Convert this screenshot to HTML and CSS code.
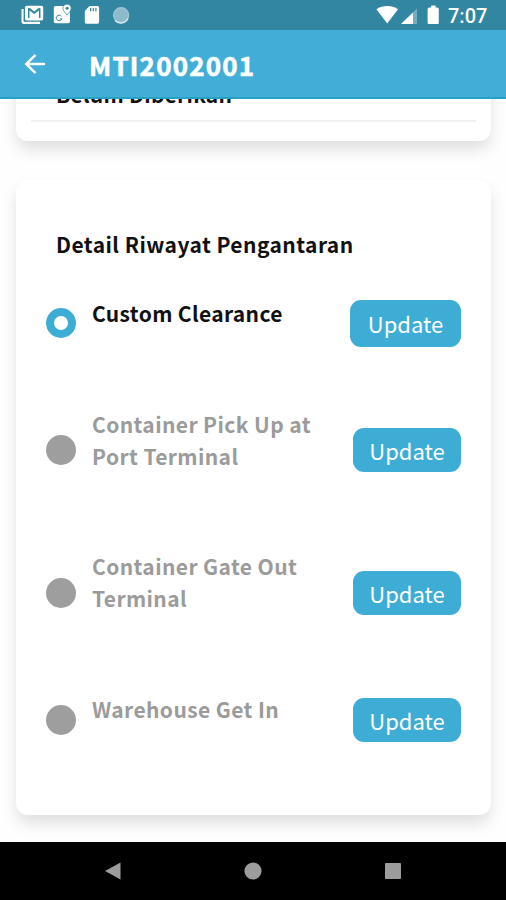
FILE: index.html
```
<!DOCTYPE html>
<html lang="id">
<head>
<meta charset="utf-8">
<title>MTI2002001</title>
<link rel="stylesheet" href="styles.css">
</head>
<body>
<div class="status">
  <div class="notices">
    <svg width="110" height="24" viewBox="0 0 110 24" fill="#fff">
      <path d="M1.500 9V21.500q0 2.500 2.500 2.500h16v-2.200H3.600V9z"/>
      <path fill-rule="evenodd" d="M6.800 5.800h14.600q1.800 0 1.800 1.800v10.900q0 2-1.800 2H6.800Q5 20.500 5 18.500V7.600q0-1.800 1.800-1.800zM8 8.500V18h1.500v-7.400l4.700 3.400 4.800-3.400V18h1.500V8.500l-1.500-.8-4.800 3.700-4.700-3.700z"/>
      <path d="M35.500 6h8.500c-1 3 1 6 3 8.800l2.500-3.300H50v10q0 1.700-1.700 1.700H35.500q-1.700 0-1.700-1.700V7.700Q33.800 6 35.500 6z"/>
      <path d="M47.100 4.200c2.400 0 4.100 1.700 4.100 4 0 2.600-2.500 4.600-4.100 7-1.600-2.400-4.200-4.400-4.200-7 0-2.300 1.800-4 4.200-4z" stroke="#3487a1" stroke-width=".7"/>
      <circle cx="47.100" cy="8.200" r="1.500" fill="#3487a1"/>
      <path d="M41.300 16.200a2.800 2.800 0 1 0 .5 2.600h-2" fill="none" stroke="#3487a1" stroke-width="1"/>
      <path fill-rule="evenodd" d="M69.500 6h8q1.600 0 1.600 1.600V22q0 1.800-1.600 1.800H66.400q-1.600 0-1.600-1.800V11zM70 8v3.200h1.300V8zm2.700 0v3.200h1.200V8zm2.600 0v3.200h1.200V8z"/>
      <circle cx="101.100" cy="15.200" r="7.500" fill="#8dbbcb" stroke="#9cc5d3" stroke-width="1.400"/>
      <path d="M95 20.500a8 8 0 0 0 13-2" fill="none" stroke="#dcebf0" stroke-width="1.300"/>
    </svg>
  </div>
  <div class="signals">
    <svg width="66" height="24" viewBox="0 0 66 24" fill="#fff">
      <path d="M.4 9.200C6 4.800 16.400 4.800 22 9.200L11.200 23.600z"/>
      <path d="M41 8.500V24H25z" fill="#75aec0"/>
      <path d="M37 12.400V24H25z"/>
      <path d="M55.200 5.500h4.400v2H61q1.800 0 1.800 1.800V22q0 2.500-1.800 2.500h-7.600q-1.800 0-1.800-2.500V9.300q0-1.800 1.800-1.800h1.800z"/>
    </svg>
    <span class="clock">7:07</span>
  </div>
</div>
<header class="appbar">
  <svg width="22" height="22" viewBox="0 0 22 22" fill="none" stroke="#fff" stroke-width="2.400"><path d="M21 11H3M11.500 1.800L2.300 11l9.200 9.200"/></svg>
  <h1>MTI2002001</h1>
</header>
<main class="content">
  <section class="card previous"><p>Belum Diberikan</p><hr></section>
  <section class="card history">
    <h2>Detail Riwayat Pengantaran</h2>
    <div class="step first"><i class="dot active"></i><p>Custom Clearance</p><button>Update</button></div>
    <div class="step second"><i class="dot"></i><p>Container Pick Up at Port Terminal</p><button>Update</button></div>
    <div class="step third"><i class="dot"></i><p>Container Gate Out Terminal</p><button>Update</button></div>
    <div class="step fourth"><i class="dot"></i><p>Warehouse Get In</p><button>Update</button></div>
  </section>
</main>
<nav class="navbar">
  <svg width="18" height="18" viewBox="0 0 18 18"><path d="M1 9L16.500 .5v17z"/></svg>
  <svg width="18" height="18" viewBox="0 0 18 18"><circle cx="9" cy="9" r="8.600"/></svg>
  <svg width="18" height="18" viewBox="0 0 18 18"><rect x="1" y="1" width="16" height="16" rx="1"/></svg>
</nav>
</body>
</html>
```
FILE: styles.css
```
* { box-sizing: border-box; }
body {
  margin: 0;
  width: 506px;
  height: 900px;
  overflow: hidden;
  display: flex;
  flex-direction: column;
  background: #fefefe;
  font-family: "Noto Sans CJK JP", "Noto Sans", sans-serif;
}
h1, h2, p { margin: 0; }
svg { display: block; flex: none; }
.status {
  flex: none;
  height: 30px;
  background: #3386a1;
  display: flex;
  justify-content: space-between;
  padding: 0 18px 0 20px;
}
.signals { display: flex; gap: 6px; }
.clock {
  font: 500 20px/33px Roboto, sans-serif;
  width: 40px;
  color: #fff;
  white-space: nowrap;
}
.appbar {
  flex: none;
  height: 69px;
  background: #42aed7;
  border-bottom: 2px solid #26a0c3;
  display: flex;
  align-items: center;
  gap: 42px;
  padding-left: 24px;
}
h1 {
  margin-top: 2px;
  padding-left: 1px;
  color: #fff;
  font-size: 26px;
  line-height: 36px;
  font-weight: 700;
  letter-spacing: 1.2px;
  -webkit-text-stroke: .6px #fff;
}
.content {
  flex: none;
  height: 743px;
  overflow: hidden;
  padding: 0 15px 0 16px;
}
.card {
  background: #fff;
  border-radius: 12px;
  box-shadow: 0 9px 16px -1px rgba(0, 0, 0, .13);
}
.previous {
  height: 80px;
  margin-top: -38px;
  padding: 17px 15px 0;
}
.previous p, h2, .step p {
  font-size: 21px;
  line-height: 32px;
  font-weight: 700;
  letter-spacing: .4px;
  color: #111;
}
.previous p { padding-left: 25px; letter-spacing: .25px; }
h2 { letter-spacing: .45px; }
hr { border: 0; height: 2px; margin: 10px 0 0; background: #f1f1f1; }
.history {
  margin-top: 39px;
  height: 635px;
  padding: 48px 30px 0;
}
h2 { padding-left: 10px; }
.step {
  display: grid;
  grid-template-columns: 30px 230px 1fr;
  column-gap: 16px;
  align-items: start;
}
.step .dot {
  width: 30px;
  height: 30px;
  border-radius: 50%;
  background: #9e9e9e;
  margin-top: 27px;
}
.step p { color: #9b9b9b; }
.step button {
  justify-self: end;
  width: 108px;
  height: 44px;
  margin-top: 20px;
  padding: 0;
  border: 0;
  border-radius: 11px;
  background: #3eadd5;
  color: #fff;
  font: 400 22px/44px "Noto Sans CJK JP", sans-serif;
}
.first { margin-top: 37px; height: 111px; }
.step.first p { color: #111; letter-spacing: .35px; }
.first .dot { margin-top: 11px; background: #fff; border: 8px solid #3eadd5; }
.first button { margin-top: 3px; width: 111px; height: 47px; line-height: 47px; }
.second { height: 142px; }
.third { height: 143px; }
.third .dot { margin-top: 28px; }
.third button { margin-top: 21px; }
.fourth .dot { margin-top: 12px; }
.fourth button { margin-top: 5px; }
.navbar {
  flex: none;
  height: 58px;
  background: #000;
  display: flex;
  justify-content: center;
  align-items: center;
  gap: 122px;
}
.navbar svg { fill: #9c9c9c; }
```
